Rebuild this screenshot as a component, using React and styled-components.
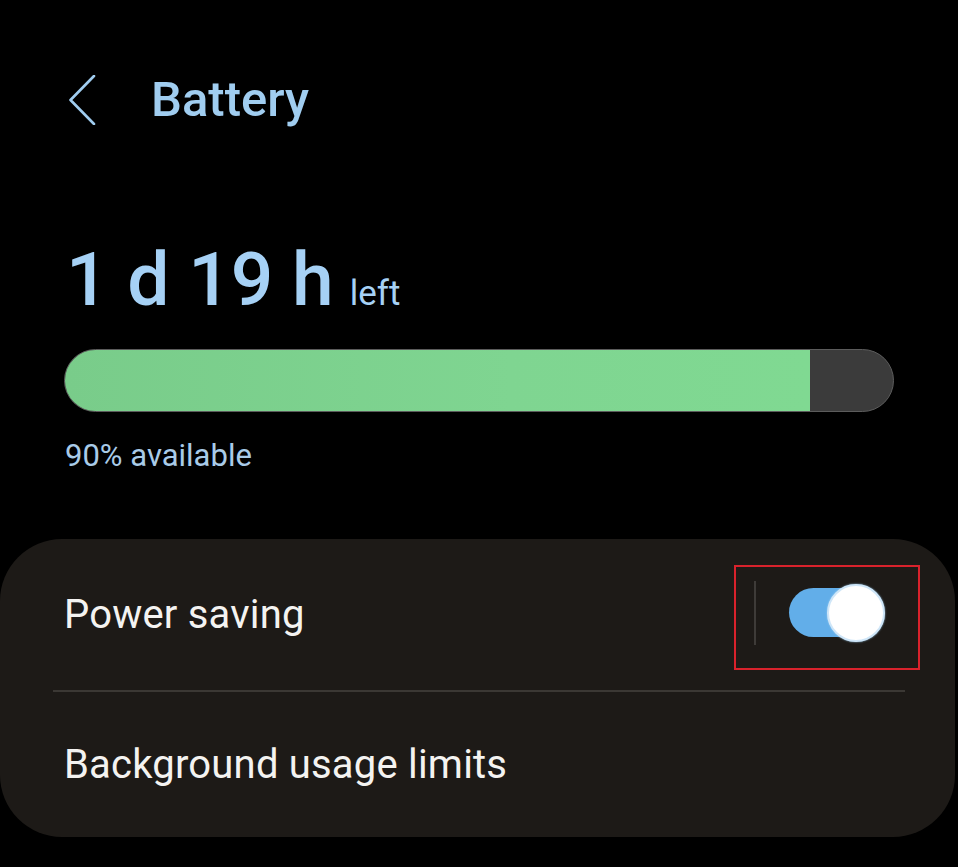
import React from "react";
import styled, { createGlobalStyle } from "styled-components";

const Global = createGlobalStyle`
  html, body { margin: 0; padding: 0; background: #000; }
  body { font-family: Roboto, "Noto Sans", sans-serif; -webkit-font-smoothing: antialiased; }
`;

const Page = styled.div`
  width: 958px;
  height: 867px;
  background: #000;
  display: flex;
  flex-direction: column;
  overflow: hidden;
`;

const Header = styled.header`
  display: flex;
  align-items: center;
  height: 50px;
  padding: 75px 0 0 69px;
  gap: 54px;
`;

const BackButton = styled.button`
  background: none;
  border: 0;
  padding: 0;
  width: 28px;
  height: 50px;
  display: flex;
  align-items: center;
  justify-content: center;
  cursor: pointer;
`;

const Title = styled.h1`
  margin: 0;
  font-size: 49px;
  line-height: 50px;
  font-weight: 500;
  color: #a0cdf0;
`;

const Summary = styled.section`
  display: flex;
  flex-direction: column;
  padding: 0 64px 0 64px;
`;

const Remaining = styled.div`
  margin-top: 114px;
  display: flex;
  align-items: baseline;
  gap: 16px;
  color: #a6d1f5;
  line-height: 80px;
`;

const BigValue = styled.span`
  font-size: 75px;
  font-weight: 500;
  margin-left: 2px;
`;

const Suffix = styled.span`
  font-size: 35px;
  font-weight: 400;
`;

const Bar = styled.div`
  margin-top: 15px;
  height: 63px;
  width: 830px;
  box-sizing: border-box;
  border-radius: 32px;
  background: #3b3b3b;
  border: 1.5px solid #5c5c5c;
  overflow: hidden;
  display: flex;
`;

const Fill = styled.div`
  height: 100%;
  background: linear-gradient(90deg, #79cc8a 0%, #7fd591 60%, #80d992 100%);
`;

const Caption = styled.div`
  margin-top: 26px;
  font-size: 31px;
  line-height: 36px;
  color: #a9cbe8;
  margin-left: 1px;
`;

const Card = styled.section`
  margin-top: 65px;
  margin-right: 3px;
  background: #1d1a17;
  border-radius: 62px;
  display: flex;
  flex-direction: column;
`;

const Row = styled.div`
  display: flex;
  align-items: center;
  justify-content: space-between;
  height: ${(p) => p.$h}px;
  padding: 0 35px 0 64px;
`;

const Label = styled.span`
  font-size: 40px;
  line-height: 46px;
  letter-spacing: 0.2px;
  color: #f4f3f1;
  font-weight: 400;
`;

const Divider = styled.hr`
  margin: 0 50px 0 53px;
  border: 0;
  height: 2px;
  background: #3b3834;
`;

const Highlight = styled.div`
  display: flex;
  align-items: center;
  border: 2px solid #d9222c;
  padding: 14px 33px 23px 18px;
  margin-top: 5px;
  gap: 33px;
`;

const Separator = styled.div`
  width: 2px;
  height: 64px;
  background: #3e3b38;
`;

const Switch = styled.div`
  position: relative;
  width: 96px;
  height: 58px;
  display: flex;
  align-items: center;
`;

const Track = styled.div`
  width: 90px;
  height: 49px;
  border-radius: 25px;
  background: #62aee9;
`;

const Thumb = styled.div`
  position: absolute;
  right: 0;
  top: 0;
  width: 54px;
  height: 54px;
  border-radius: 50%;
  background: #fff;
  border: 2px solid #cfe6f8;
  box-shadow: 0 0 2px #9fcff2;
`;

export default function App() {
  const percent = 90;
  return (
    <>
      <Global />
      <Page>
        <Header>
          <BackButton aria-label="Back">
            <svg width="28" height="50" viewBox="0 0 28 50">
              <path d="M25 1 L1.5 25 L25 49" fill="none" stroke="#a0cdf0" strokeWidth="2.6" strokeLinecap="round" strokeLinejoin="round" />
            </svg>
          </BackButton>
          <Title>Battery</Title>
        </Header>
        <Summary>
          <Remaining>
            <BigValue>1 d 19 h</BigValue>
            <Suffix>left</Suffix>
          </Remaining>
          <Bar>
            <Fill style={{ width: `${percent}%` }} />
          </Bar>
          <Caption>{percent}% available</Caption>
        </Summary>
        <Card>
          <Row $h={151}>
            <Label>Power saving</Label>
            <Highlight>
              <Separator />
              <Switch>
                <Track />
                <Thumb />
              </Switch>
            </Highlight>
          </Row>
          <Divider />
          <Row $h={145}>
            <Label>Background usage limits</Label>
          </Row>
        </Card>
      </Page>
    </>
  );
}
